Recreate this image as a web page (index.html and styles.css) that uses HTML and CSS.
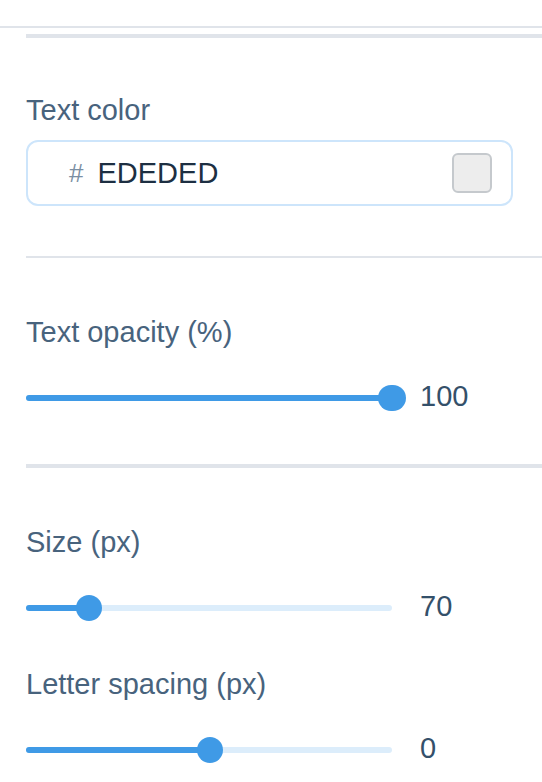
FILE: index.html
```html
<!DOCTYPE html>
<html lang="en">
<head>
<meta charset="utf-8">
<title>Text settings</title>
<link rel="stylesheet" href="styles.css">
</head>
<body>
  <div class="top-rule"></div>
  <div class="panel">
    <section class="section rule-thick first">
      <div class="label">Text color</div>
      <div class="color-input">
        <span class="hash">#</span>
        <span class="hex">EDEDED</span>
        <span class="swatch"></span>
      </div>
    </section>

    <section class="section rule-thin second">
      <div class="label">Text opacity (%)</div>
      <div class="slider-row">
        <div class="slider">
          <div class="fill" style="width:100%"></div>
          <div class="thumb big" style="left:100%"></div>
        </div>
        <span class="value">100</span>
      </div>
    </section>

    <section class="section rule-thick third">
      <div class="field">
        <div class="label">Size (px)</div>
        <div class="slider-row">
          <div class="slider">
            <div class="fill" style="width:17.2%"></div>
            <div class="thumb" style="left:17.2%"></div>
          </div>
          <span class="value">70</span>
        </div>
      </div>
      <div class="field next">
        <div class="label">Letter spacing (px)</div>
        <div class="slider-row">
          <div class="slider">
            <div class="fill" style="width:50.3%"></div>
            <div class="thumb" style="left:50.3%"></div>
          </div>
          <span class="value">0</span>
        </div>
      </div>
    </section>
  </div>
</body>
</html>
```

FILE: styles.css
```css
* { box-sizing: border-box; }

html, body {
  margin: 0;
  padding: 0;
  background: #ffffff;
}

body {
  font-family: "Liberation Sans", Arial, sans-serif;
  color: #3b5670;
  overflow: hidden;
}

.top-rule {
  margin-top: 26px;
  height: 2px;
  background: #e0e4ea;
}

.panel {
  margin-top: 6px;
  padding-left: 26px;
}

.section.rule-thick { border-top: 4px solid #e0e4ea; }
.section.rule-thin { border-top: 2px solid #e0e4ea; }

.section.first { padding-top: 55px; padding-bottom: 50px; }
.section.second { padding-top: 57px; padding-bottom: 53px; }
.section.third { padding-top: 57px; }

.label {
  font-size: 29px;
  line-height: 34px;
  height: 34px;
  color: #48637d;
  white-space: nowrap;
}

.first .label { margin-bottom: 13px; }
.second .label, .third .label { margin-bottom: 36px; }

.field.next { margin-top: 46px; }

.color-input {
  width: 487px;
  height: 66px;
  border: 2px solid #cde5fb;
  border-radius: 12px;
  display: flex;
  align-items: center;
  padding: 0 19px 0 41px;
}

.hash {
  font-size: 26px;
  line-height: 30px;
  color: #7b8fa3;
  margin-right: 14px;
}

.hex {
  font-size: 29px;
  line-height: 34px;
  color: #1d2f42;
}

.swatch {
  margin-left: auto;
  width: 40px;
  height: 40px;
  border: 2px solid #c5c9cd;
  border-radius: 6px;
  background: #ededed;
}

.slider-row {
  display: flex;
  align-items: center;
  height: 26px;
}

.slider {
  position: relative;
  width: 366px;
  height: 6px;
  border-radius: 3px;
  background: #dcedfb;
  flex: none;
}

.fill {
  height: 100%;
  border-radius: 3px;
  background: #3f9ae6;
}

.thumb {
  position: absolute;
  top: 50%;
  width: 26px;
  height: 26px;
  border-radius: 50%;
  background: #3f9ae6;
  transform: translate(-50%, -50%);
}

.thumb.big {
  width: 28px;
  border-radius: 13px;
}

.value {
  margin-left: 28px;
  margin-bottom: 4px;
  font-size: 29px;
  line-height: 34px;
  color: #34506a;
}
```
